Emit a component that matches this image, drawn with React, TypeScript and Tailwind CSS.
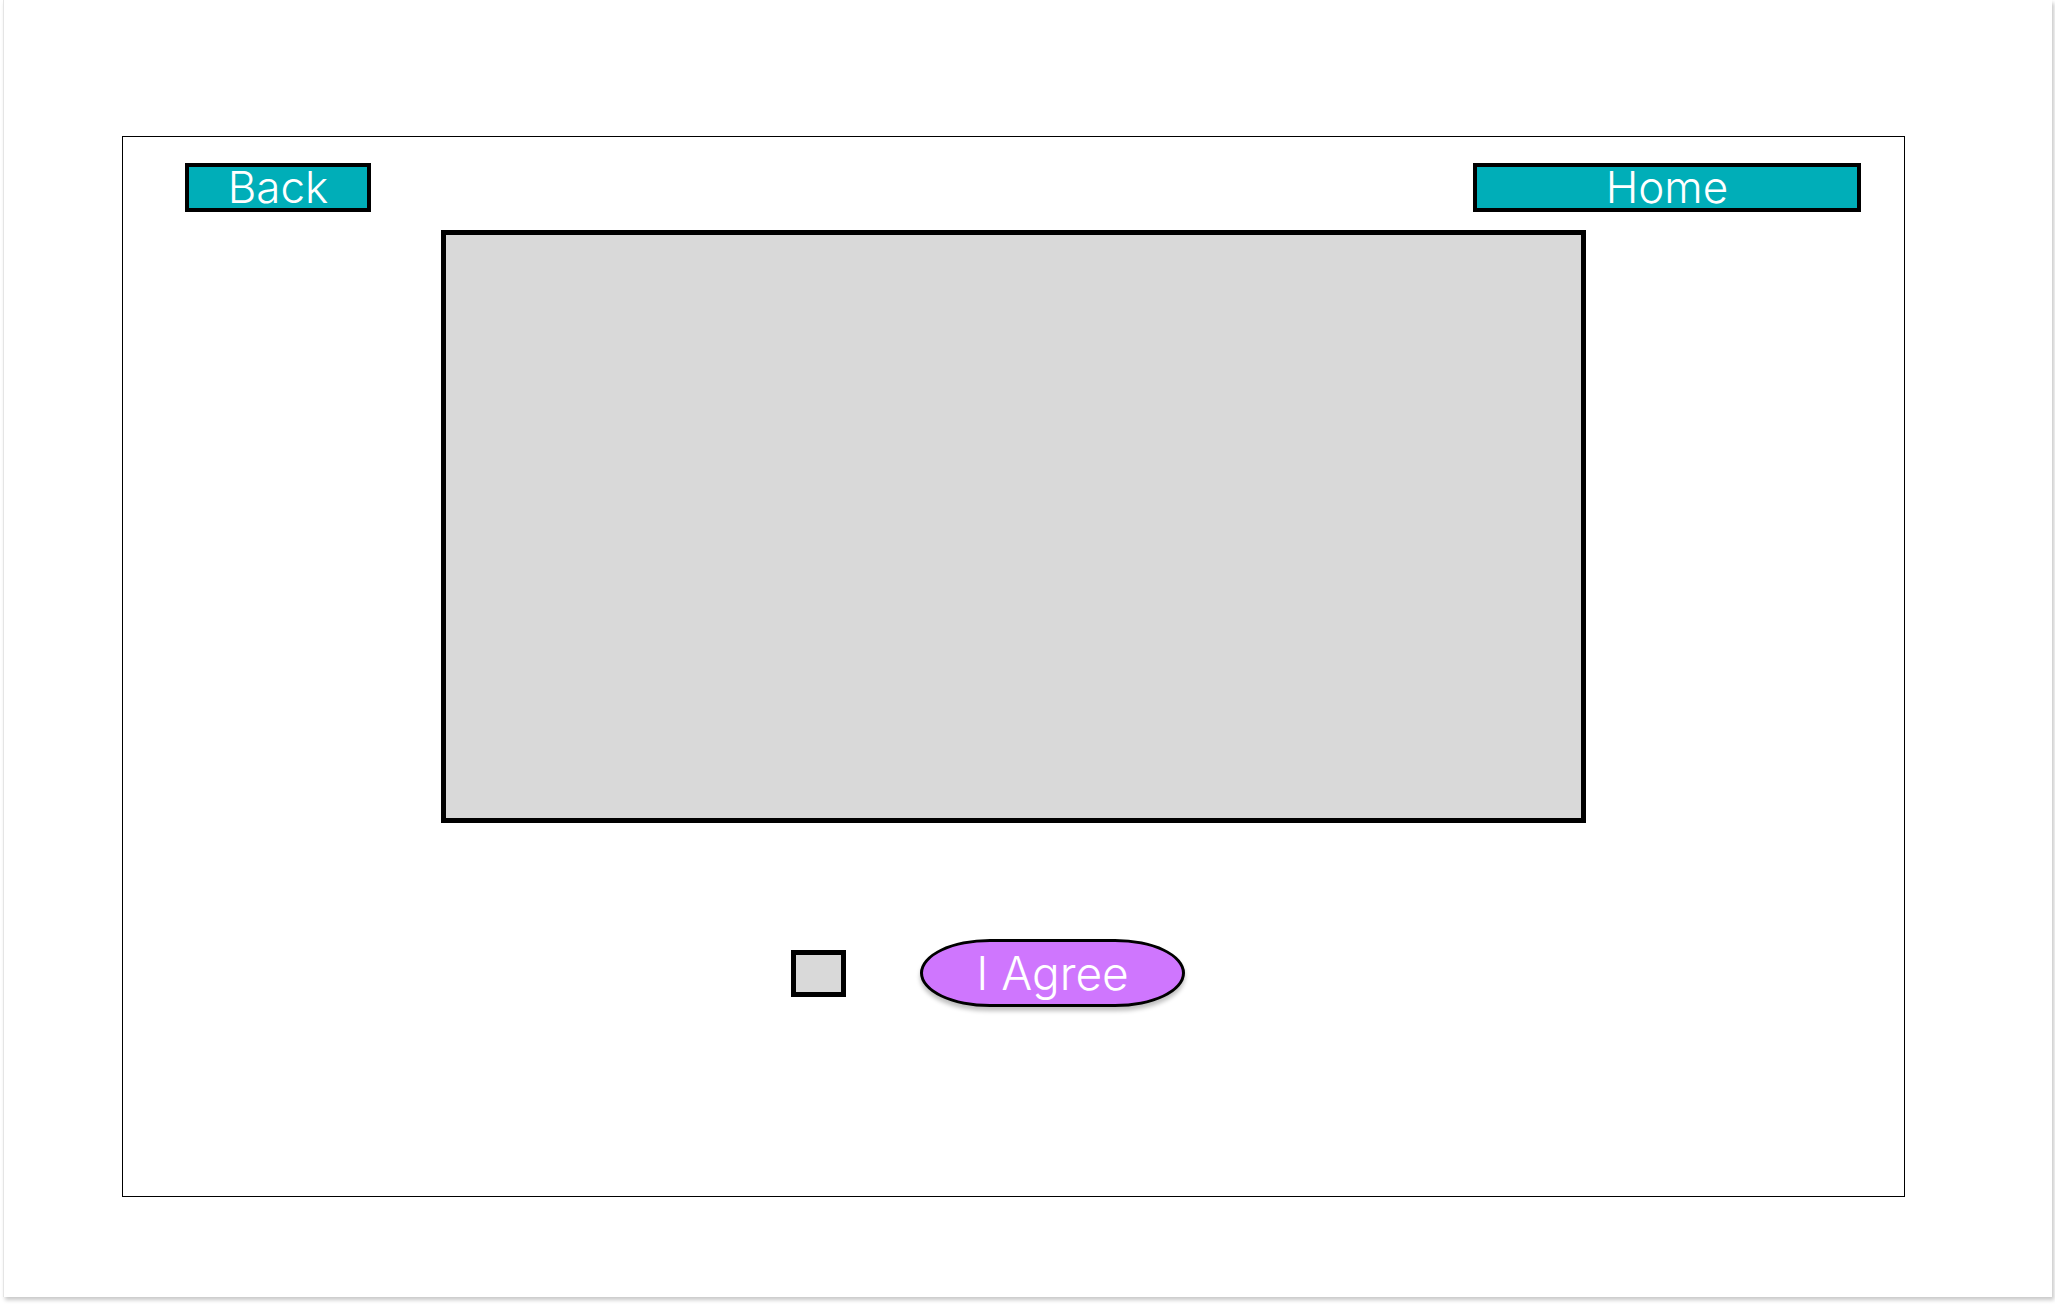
export default function App() {
  return (
    <div className="w-[2055px] h-[1305px] bg-white pl-[3px] overflow-hidden" style={{ fontFamily: "Inter, 'Noto Sans', sans-serif" }}>
      <div className="w-[2049px] h-[1297px] bg-white border-l border-[#e5e5e5] shadow-[2px_3px_4px_rgba(0,0,0,0.22)] pl-[118px] pt-[136px]">
        <div className="w-[1783px] h-[1061px] border border-black flex flex-col">
          <div className="flex justify-between items-start mt-[26px] pl-[62px] pr-[43px]">
            <button className="w-[186px] h-[49px] bg-[#00aeb8] border-4 border-black text-white text-[44px] font-[350] leading-none flex items-center justify-center pb-[2px]">
              Back
            </button>
            <button className="w-[388px] h-[49px] bg-[#00aeb8] border-4 border-black text-white text-[44px] font-[350] leading-none flex items-center justify-center pb-[2px]">
              Home
            </button>
          </div>
          <div className="ml-[318px] mt-[18px] w-[1145px] h-[593px] bg-[#d9d9d9] border-[5px] border-black" />
          <div className="flex items-center mt-[116px] ml-[668px] gap-[74px]">
            <div className="w-[55px] h-[47px] bg-[#d9d9d9] border-[5px] border-black" />
            <button className="w-[265px] h-[68px] rounded-[70px/34px] bg-[#cf76fe] border-[3px] border-black text-white text-[46px] font-[350] leading-none flex items-center justify-center shadow-[0_4px_4px_rgba(0,0,0,0.25)]">
              I Agree
            </button>
          </div>
        </div>
      </div>
    </div>
  )
}
